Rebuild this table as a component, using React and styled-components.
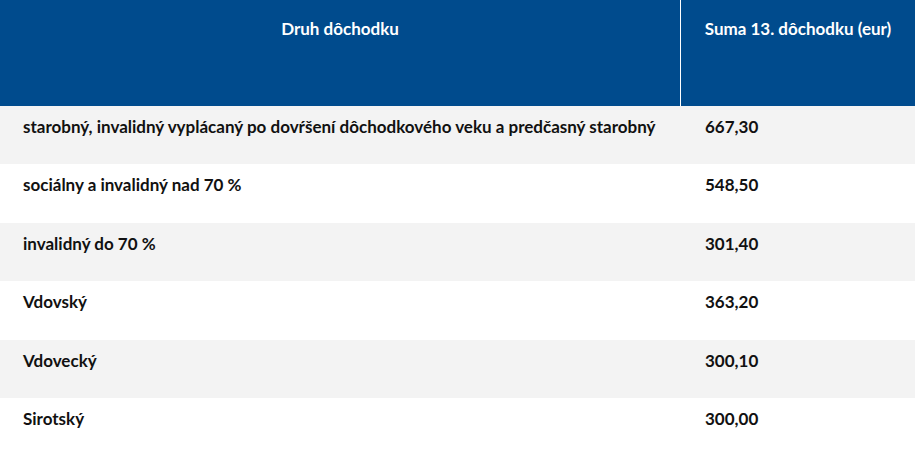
import React from "react";
import styled, { createGlobalStyle } from "styled-components";

const Global = createGlobalStyle`
  html, body { margin: 0; padding: 0; background: #fff; }
  body { font-family: Lato, "Noto Sans", sans-serif; }
`;

const Table = styled.div`
  width: 915px;
  display: grid;
  grid-template-columns: 680px 1fr;
  font-weight: 700;
  font-size: 17px;
  color: #111;
`;

const HeadCell = styled.div`
  background: #004b8d;
  color: #fff;
  height: 106px;
  box-sizing: border-box;
  padding-top: 18px;
  line-height: 22px;
  text-align: center;
  border-left: ${(p) => (p.$divider ? "1px solid #fff" : "none")};
`;

const Cell = styled.div`
  background: ${(p) => (p.$alt ? "#f3f3f3" : "#fff")};
  height: 58.4px;
  box-sizing: border-box;
  padding: 9px 0 0 ${(p) => (p.$right ? "25px" : "23px")};
  line-height: 24px;
`;

const rows = [
  ["starobný, invalidný vyplácaný po dovŕšení dôchodkového veku a predčasný starobný", "667,30"],
  ["sociálny a invalidný nad 70 %", "548,50"],
  ["invalidný do 70 %", "301,40"],
  ["Vdovský", "363,20"],
  ["Vdovecký", "300,10"],
  ["Sirotský", "300,00"],
];

export default function App() {
  return (
    <>
      <Global />
      <Table>
        <HeadCell>Druh dôchodku</HeadCell>
        <HeadCell $divider>Suma 13. dôchodku (eur)</HeadCell>
        {rows.map(([a, b], i) => (
          <React.Fragment key={i}>
            <Cell $alt={i % 2 === 0}>{a}</Cell>
            <Cell $alt={i % 2 === 0} $right>{b}</Cell>
          </React.Fragment>
        ))}
      </Table>
    </>
  );
}
